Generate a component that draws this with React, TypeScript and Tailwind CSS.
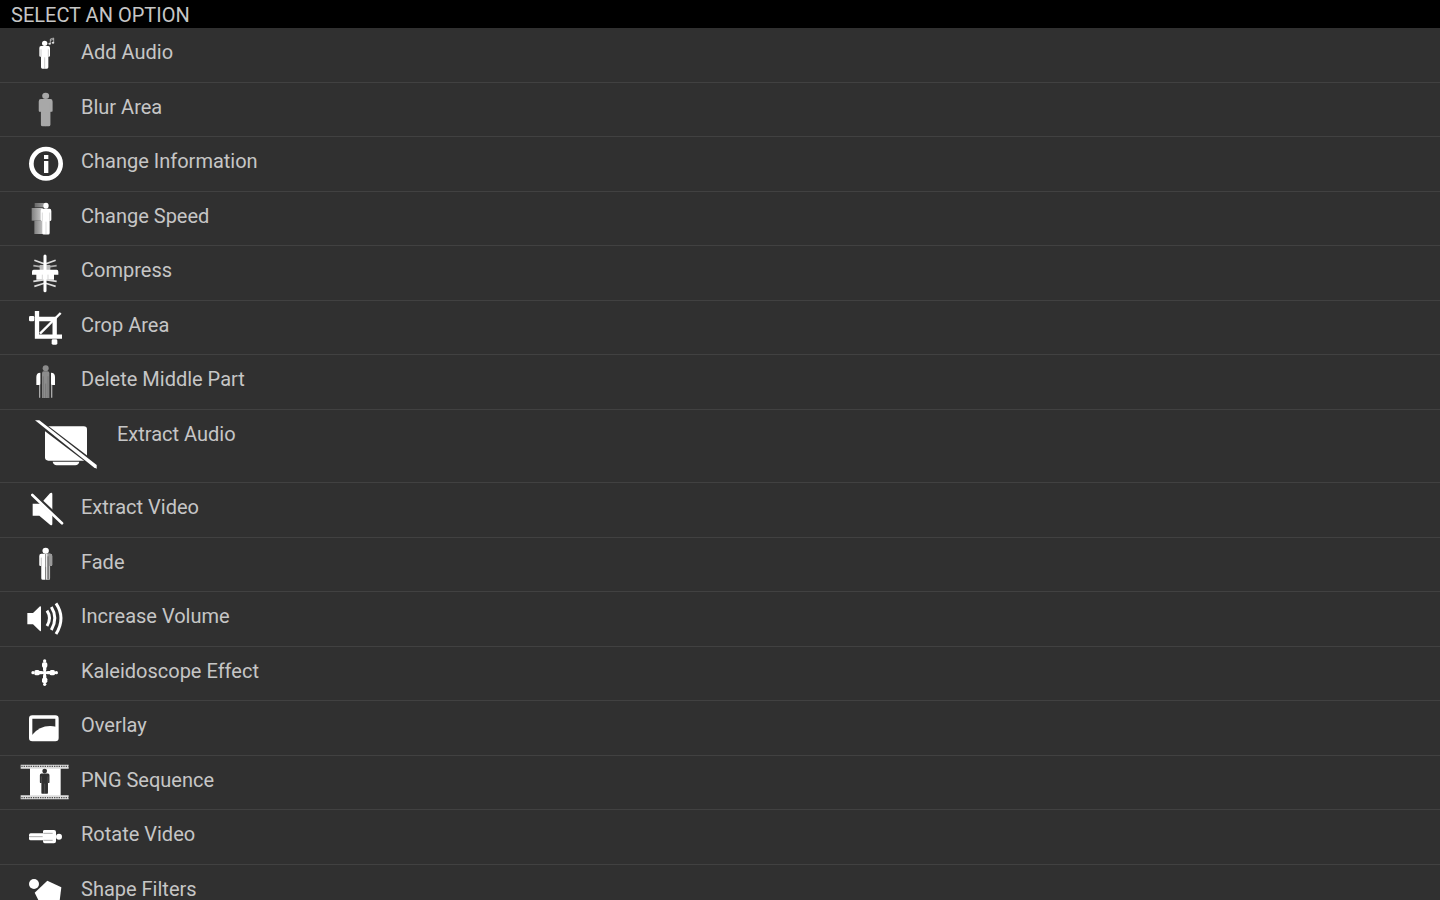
import type { ReactNode } from 'react';

interface Option {
  label: string;
  icon: ReactNode;
  large?: boolean;
}

interface PersonProps {
  x: number;
  y: number;
  sx?: number;
  sy?: number;
  fill?: string;
  gap?: string;
}

// Standing figure, 32 wide and 84 high, centred on x with its head at y
function Person({ x, y, sx = 1, sy = 1, fill = '#fff', gap = '#606060' }: PersonProps) {
  return (
    <g transform={`translate(${x} ${y}) scale(${sx} ${sy})`} fill={fill}>
      <circle cx="0" cy="8" r="8" />
      <path d="M-11 16H11Q16 16 16 22V45Q16 48 13 48H11V80Q11 84 7 84H-7Q-11 84 -11 80V48H-13Q-16 48 -16 45V22Q-16 16 -11 16Z" />
      <path d="M-11 26V48M11 26V48M0 50V84" stroke={gap} strokeWidth="1" fill="none" />
    </g>
  );
}

const options: Option[] = [
  {
    label: 'Add Audio',
    icon: (
      <>
        <Person x={134} y={38} />
        <path d="M151 46V33L161 30V43M151 37L161 34" stroke="#ddd" strokeWidth="2" fill="none" />
        <ellipse cx="149" cy="47" rx="4" ry="3" fill="#ddd" />
        <ellipse cx="159" cy="44" rx="4" ry="3" fill="#ddd" />
      </>
    ),
  },
  {
    label: 'Blur Area',
    icon: <Person x={137} y={29} sx={1.3} sy={1.2} fill="#a8a8a8" gap="#a8a8a8" />,
  },
  {
    label: 'Change Information',
    icon: (
      <>
        <circle cx="138" cy="80" r="44" stroke="#fff" strokeWidth="14" fill="none" />
        <path d="M132 54H145V66H132ZM132 72H145V108H132Z" fill="#fff" />
      </>
    ),
  },
  {
    label: 'Change Speed',
    icon: (
      <>
        <defs>
          <linearGradient id="trail" x1="0" x2="1">
            <stop offset="0" stopColor="#808080" />
            <stop offset="1" stopColor="#d0d0d0" />
          </linearGradient>
        </defs>
        <path d="M104 33H136V46H104Z" fill="url(#trail)" opacity="0.7" />
        <path d="M95 48H128V86H95Z" fill="url(#trail)" />
        <path d="M103 86H134V126H103Z" fill="url(#trail)" />
        <Person x={138} y={32} sy={1.14} gap="#999" />
      </>
    ),
  },
  {
    label: 'Compress',
    icon: (
      <>
        <path d="M103 43L135 54L167 43" stroke="#ddd" strokeWidth="5" fill="none" />
        <path d="M100 59L135 64L170 59" stroke="#aaa" strokeWidth="5" fill="none" />
        <path d="M119 57H151V72H119Z" fill="#bbb" />
        <path d="M101 71H170Q175 71 175 77V86H162V101H109V86H96V77Q96 71 101 71Z" fill="#fff" />
        <path d="M127 86V101M144 86V101" stroke="#888" strokeWidth="1" />
        <path d="M100 106L135 101L170 106M103 121L135 111L167 121" stroke="#ddd" strokeWidth="5" fill="none" />
        <path d="M135 30V134" stroke="#fff" strokeWidth="9" strokeLinecap="round" />
      </>
    ),
  },
  {
    label: 'Crop Area',
    icon: (
      <>
        <path d="M111 30V107H186M111 54H164V107" stroke="#fff" strokeWidth="13" fill="none" />
        <path d="M120 98L182 36" stroke="#fff" strokeWidth="7" />
        <rect x="87" y="45" width="16" height="16" rx="4" fill="#fff" />
        <rect x="155" y="115" width="17" height="16" rx="4" fill="#fff" />
      </>
    ),
  },
  {
    label: 'Delete Middle Part',
    icon: (
      <>
        <path d="M119 54V128M155 54V128" stroke="#aaa" strokeWidth="4" />
        <path d="M121 53V86Q121 90 117 90H109V66Q109 53 121 53ZM153 53V86Q153 90 157 90H165V66Q165 53 153 53Z" fill="#fff" />
        <path d="M124 52V129M150 52V129" stroke="#303030" strokeWidth="3" />
        <circle cx="137" cy="40" r="9" fill="#8c8c8c" />
        <path d="M131 49H143Q148 49 148 55V129H126V55Q126 49 131 49Z" fill="#8c8c8c" />
        <path d="M130 64V129M137 86V129M144 64V129" stroke="#505050" strokeWidth="1" />
      </>
    ),
  },
  {
    label: 'Extract Audio',
    large: true,
    icon: (
      <>
        <rect x="135" y="49" width="126" height="103" rx="10" fill="#fff" />
        <path d="M158 155H238Q236 165 226 166H170Q160 165 158 155Z" fill="#fff" />
        <path d="M110 33L290 170" stroke="#303030" strokeWidth="18" />
        <path d="M105 31L118 31L290 165V176L281 172Z" fill="#fff" />
      </>
    ),
  },
  {
    label: 'Extract Video',
    icon: (
      <>
        <path d="M98 62H122L150 31Q157 27 157 34V122Q157 130 150 125L118 98H98Z" fill="#fff" />
        <path d="M99 33L189 118" stroke="#303030" strokeWidth="13" />
        <path d="M97 36L186 121" stroke="#fff" strokeWidth="8" strokeLinecap="round" />
      </>
    ),
  },
  {
    label: 'Fade',
    icon: (
      <>
        <Person x={137} y={29} sx={1.2} sy={1.15} />
        <path d="M142 47H151Q157 47 157 54V80Q157 84 153 84H149V122Q149 126 144 126H142Z" fill="#999" />
        <path d="M137 48V126M144 55V124" stroke="#444" strokeWidth="2" />
      </>
    ),
  },
  {
    label: 'Increase Volume',
    icon: (
      <>
        <path d="M82 63H99L120 43Q123 42 123 46V115Q123 119 120 117L99 97H82Z" fill="#fff" />
        <path
          d="M141 56Q156 78 141 102M154 45Q175 78 154 114M168 34Q198 78 168 126"
          stroke="#fff"
          strokeWidth="9"
          fill="none"
        />
      </>
    ),
  },
  {
    label: 'Kaleidoscope Effect',
    icon: (
      <>
        {[0, 90, 180, 270].map((angle) => (
          <g key={angle} transform={`rotate(${angle} 134 77)`} fill="#fff">
            <circle cx="134" cy="42" r="5" />
            <rect x="126" y="46" width="16" height="16" rx="5" />
            <path d="M129 58H139V67L137 78H131L129 67Z" />
          </g>
        ))}
      </>
    ),
  },
  {
    label: 'Overlay',
    icon: (
      <>
        <rect x="92" y="48" width="79" height="68" rx="5" stroke="#fff" strokeWidth="10" fill="none" />
        <path d="M96 113V102Q124 68 168 77V113Z" fill="#fff" />
      </>
    ),
  },
  {
    label: 'PNG Sequence',
    icon: (
      <>
        <path d="M90 27H182V129H90Z" fill="#fff" />
        <path d="M62 32H206M62 124H206" stroke="#ddd" strokeWidth="12" />
        <path d="M64 31H206M64 125H206" stroke="#505050" strokeWidth="4" strokeDasharray="4 3" />
        <Person x={134} y={38} sx={0.9} sy={0.9} fill="#303030" gap="#999" />
      </>
    ),
  },
  {
    label: 'Rotate Video',
    icon: (
      <>
        <path d="M92 70H129V64Q129 60 134 60H162Q168 60 168 66V94Q168 100 162 100H134Q129 100 129 94V91H92Q87 91 87 86V75Q87 70 92 70Z" fill="#fff" />
        <circle cx="177" cy="80" r="9" fill="#fff" />
        <path d="M87 80H128M130 70H158M130 91H158" stroke="#808080" strokeWidth="2" />
      </>
    ),
  },
  {
    label: 'Shape Filters',
    icon: (
      <>
        <circle cx="102" cy="57" r="15" fill="#fff" />
        <path d="M142 47L184 67L178 115H120L104 83Z" fill="#fff" />
      </>
    ),
  },
];

export default function App() {
  return (
    <main className="flex h-screen flex-col overflow-hidden bg-[#303030] font-[Roboto,sans-serif] text-[20px] text-[#c6c6c6]">
      <h1 className="h-7 shrink-0 bg-black px-[11px] leading-[30px]">SELECT AN OPTION</h1>
      <ul className="min-h-0 flex-1 overflow-hidden">
        {options.map(({ label, icon, large }) => (
          <li
            key={label}
            className={`border-b border-[#414141] ${large ? 'h-[73px]' : 'odd:h-[55px] even:h-[54px]'}`}
          >
            <button type="button" className="flex h-full w-full items-start text-left">
              <svg
                viewBox={large ? '0 0 351 216' : '0 0 243 162'}
                className={large ? 'h-[72px] w-[117px] shrink-0' : 'h-[54px] w-[81px] shrink-0'}
                aria-hidden="true"
              >
                {icon}
              </svg>
              <span className="leading-[48px]">{label}</span>
            </button>
          </li>
        ))}
      </ul>
    </main>
  );
}
